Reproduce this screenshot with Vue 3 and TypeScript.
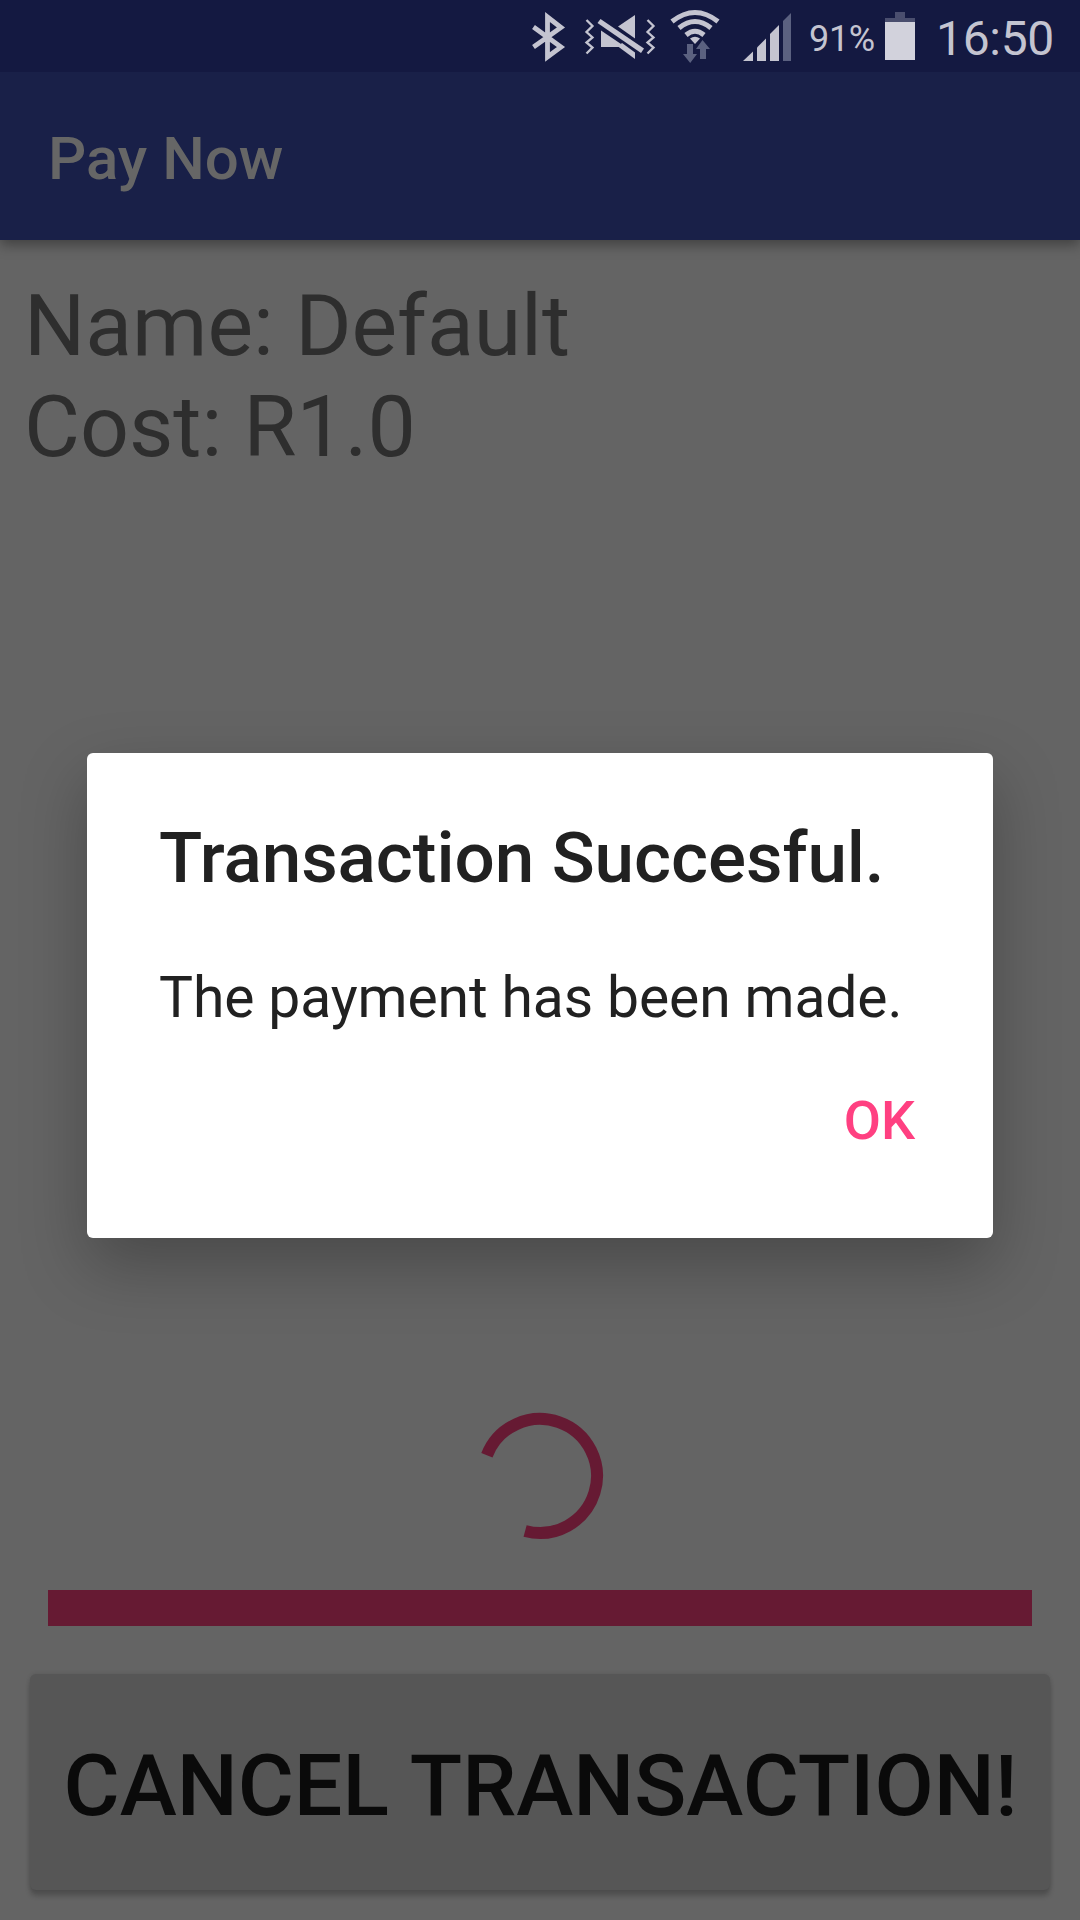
<script setup lang="ts">
import { ref } from 'vue'

const title = ref('Pay Now')
const details = ref<{ label: string; value: string }[]>([
  { label: 'Name', value: 'Default' },
  { label: 'Cost', value: 'R1.0' },
])
const battery = ref(91)
const clock = ref('16:50')
const dialogOpen = ref(true)
</script>

<template>
  <div class="screen">
    <header class="status">
      <svg class="status-icons" width="290" height="72" viewBox="0 0 290 72">
        <!-- bluetooth -->
        <path d="M23.500 27 51 47 37.500 57V17L51 27.500 23.500 47" fill="none" stroke="#c4c4d0" stroke-width="4.800" />
        <!-- muted, vibrating -->
        <g fill="#c4c4d0">
          <path d="M91 30.500 115.500 47H91Z" />
          <path d="M108 46.500 125 59V52.500L112 43Z" />
          <path d="M125 15V38.500L108 26.500Z" />
          <path d="M90.500 19 134 48.500 131 53 87.500 23Z" />
        </g>
        <g fill="none" stroke="#c4c4d0" stroke-width="2.300">
          <path d="M76.500 20 82.500 26 76.500 32 82.500 37.500 76.500 42.500 82.500 47.500 76.500 53.500" />
          <path d="M137.500 20 143.500 26 137.500 32 143.500 37.500 137.500 42.500 143.500 47.500 137.500 53.500" />
        </g>
        <!-- wifi -->
        <g fill="none" stroke="#c4c4d0" stroke-width="5">
          <path d="M162 21.500Q185 3.500 208 21.500" />
          <path d="M169 28Q185 15 201 28" />
          <path d="M176 35Q185 27.500 194 35" />
        </g>
        <path d="M180 38.500Q185 35 190 38.500L185 44Z" fill="#c4c4d0" />
        <g fill="#5b6180">
          <path d="M177 44H183V54H187L180.200 63 173 54H177Z" />
          <path d="M192.500 40 200 49H196V59H190V49H186Z" />
        </g>
        <!-- cell signal -->
        <g fill="#c4c4d0">
          <path d="M233 61 243 51.500V61Z" />
          <path d="M247 61V47.500L256 38.500V61Z" />
          <path d="M260 61V34L269 25V61Z" />
        </g>
        <path d="M273 61V21L281 13V61Z" fill="#5b6180" />
      </svg>
      <span class="percent">{{ battery }}%</span>
      <svg class="battery" width="30" height="72" viewBox="0 0 30 72">
        <path d="M10 12H20V18H30V22H0V18H10Z" fill="#4a4e6e" />
        <path d="M0 22H30V60H0Z" fill="#d2d2dc" />
      </svg>
      <span class="clock">{{ clock }}</span>
    </header>

    <div class="app-bar">{{ title }}</div>

    <main class="content">
      <div class="details">
        <div v-for="d in details" :key="d.label">{{ d.label }}: {{ d.value }}</div>
      </div>
      <svg class="spinner" width="144" height="144" viewBox="-72.300 -72 144 144">
        <path d="M-53.400 -20.800A57 57 0 1 1 -15.200 55" fill="none" stroke="#661a33" stroke-width="12" />
      </svg>
      <div class="progress"></div>
      <button class="cancel" type="button">CANCEL TRANSACTION!</button>
    </main>

    <section v-if="dialogOpen" class="dialog" role="alertdialog">
      <h1 class="dialog-title">Transaction Succesful.</h1>
      <p class="dialog-text">The payment has been made.</p>
      <button class="ok" type="button" @click="dialogOpen = false">OK</button>
    </section>
  </div>
</template>

<style>
body {
  margin: 0;
}
</style>

<style scoped>
.screen {
  position: relative;
  display: flex;
  flex-direction: column;
  width: 1080px;
  height: 1920px;
  overflow: hidden;
  background: #646464;
  font-family: Roboto, sans-serif;
}
.screen * {
  box-sizing: border-box;
}
.status {
  position: relative;
  z-index: 1;
  flex: none;
  display: flex;
  justify-content: flex-end;
  height: 72px;
  padding-right: 26px;
  background: #141941;
  color: #c4c4d0;
  white-space: nowrap;
}
.status-icons {
  flex: none;
}
.percent {
  width: 76px;
  padding-left: 9px;
  font-size: 36px;
  letter-spacing: -0.3px;
  line-height: 79px;
}
.battery {
  flex: none;
  margin-left: 9px;
}
.clock {
  width: 139px;
  padding-left: 21px;
  font-size: 48px;
  letter-spacing: -0.3px;
  line-height: 77px;
}
.app-bar {
  position: relative;
  flex: none;
  height: 168px;
  padding: 5px 48px 0;
  background: #192048;
  box-shadow: 0 5px 12px rgba(0, 0, 0, 0.35);
  color: #666;
  font-size: 60px;
  font-weight: 500;
  line-height: 163px;
}
.content {
  flex: 1;
  display: flex;
  flex-direction: column;
  align-items: center;
  padding: 35px 30px 30px;
}
.details {
  align-self: stretch;
  margin-left: -6px;
  color: #2e2e2e;
  font-size: 86px;
  letter-spacing: -0.03px;
  line-height: 101px;
}
.spinner {
  margin-top: auto;
}
.progress {
  width: 984px;
  height: 36px;
  margin-top: 42px;
  background: #661a33;
}
.cancel {
  width: 1020px;
  height: 216px;
  margin-top: 48px;
  padding: 7px 0 0 1px;
  border: 0;
  border-radius: 6px;
  background: #565656;
  box-shadow: 0 6px 5px rgba(0, 0, 0, 0.2), 0 0 4px rgba(0, 0, 0, 0.12);
  color: #0a0a0a;
  font-family: inherit;
  font-size: 86px;
  font-weight: 500;
  line-height: 101px;
  word-spacing: 1.5px;
  white-space: nowrap;
}
.dialog {
  position: absolute;
  top: 753px;
  left: 87px;
  display: flex;
  flex-direction: column;
  width: 906px;
  height: 485px;
  padding: 62px 78px 0 72px;
  border-radius: 6px;
  background: #fff;
  box-shadow: 0 27px 66px rgba(0, 0, 0, 0.27);
  color: #212121;
  white-space: nowrap;
}
.dialog-title {
  margin: 0;
  font-size: 71px;
  font-weight: 500;
  letter-spacing: -0.07px;
  line-height: 85px;
}
.dialog-text {
  margin: 64px 0 0;
  font-size: 57px;
  letter-spacing: -0.11px;
  line-height: 67px;
}
.ok {
  align-self: flex-end;
  margin-top: 58px;
  padding: 0;
  border: 0;
  background: none;
  color: #ff4081;
  font-family: inherit;
  font-size: 54px;
  font-weight: 500;
  line-height: 63px;
}
</style>
